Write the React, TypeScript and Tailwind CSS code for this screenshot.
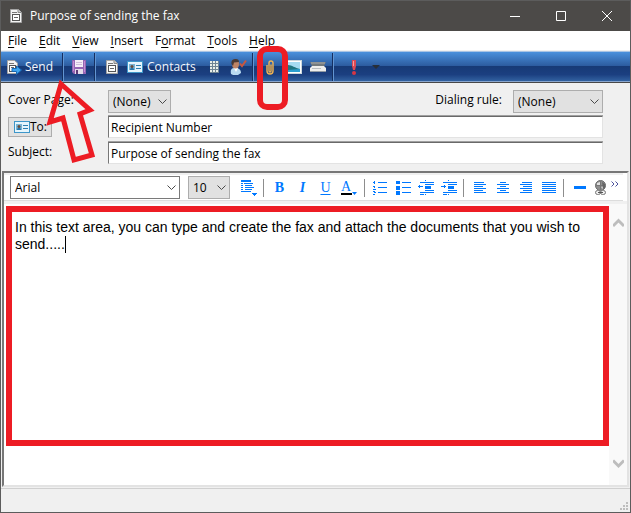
import React from "react";

const BLUE = "#0078ff";

function Lines({ rects, w = 16, h = 16 }: { rects: number[][]; w?: number; h?: number }) {
  return (
    <svg width={w} height={h} className="shrink-0" shapeRendering="crispEdges" fill={BLUE} aria-hidden="true">
      {rects.map(([x, y, rw, rh], i) => (
        <rect key={i} x={x} y={y} width={rw} height={rh} />
      ))}
    </svg>
  );
}

function FaxIcon() {
  return (
    <svg width="14" height="16" viewBox="0 0 14 16" aria-hidden="true">
      <path d="M1.500 1.500h8L12.500 4.500v10h-11z" fill="#f4f4f4" stroke="#a5a5a5" />
      <path d="M9 1.500v3h3.500" fill="#ccc" stroke="#888" />
      <path d="M3 4.500h5" stroke="#777" />
      <rect x="3.500" y="6.500" width="7" height="6" fill="#fff" stroke="#555" />
      <path d="M5 9.500h4" stroke="#666" />
    </svg>
  );
}

function SendIcon() {
  return (
    <svg width="15" height="16" viewBox="0 0 15 16" aria-hidden="true">
      <path d="M.5 1.500h7L10.500 4v10.500H.5z" fill="#f4f4f4" stroke="#a5a5a5" />
      <path d="M2 4.500h5" stroke="#777" />
      <rect x="2.500" y="6.500" width="6" height="6" fill="#fff" stroke="#555" />
      <path d="M4 8.500h3" stroke="#666" />
      <path d="M5 9.500h4.500V7L14.500 11l-5 4.500v-3H5z" fill="#3ea4ee" stroke="#1668b4" />
    </svg>
  );
}

function FloppyIcon() {
  return (
    <svg width="14" height="14" viewBox="0 0 14 14" aria-hidden="true">
      <path d="M0 0h14v14H2l-2-2z" fill="#9565b4" />
      <rect x="3" y="0" width="8" height="7" fill="#f6edf8" />
      <path d="M4 2.500h6M4 4.500h6" stroke="#d0bddb" />
      <rect x="3" y="9" width="8" height="5" fill="#e4dcea" />
      <rect x="4" y="10" width="2" height="4" fill="#5c3a78" />
      <path d="M1.500 1v10M12.500 1v11" stroke="#c08ed2" />
    </svg>
  );
}

function CardIcon() {
  return (
    <svg width="16" height="12" viewBox="0 0 16 12" className="shrink-0" aria-hidden="true">
      <rect x=".5" y=".5" width="15" height="11" fill="#e5f5fc" stroke="#3d96c9" />
      <rect x="2" y="3" width="6" height="6" fill="#78b5d5" />
      <circle cx="5" cy="5.500" r="1.500" fill="#684c3c" />
      <path d="M3 9c0-3 4-3 4 0z" fill="#2575ab" />
      <path d="M9 4.500h5M9 7.500h5" stroke="#2d7fb0" />
    </svg>
  );
}

function KeypadIcon() {
  return (
    <svg width="9" height="12" shapeRendering="crispEdges" aria-hidden="true">
      <rect width="9" height="12" fill="#6f8594" />
      {[0, 3, 6, 9].map((y) =>
        [0, 3, 6].map((x) => <rect key={`${x}-${y}`} x={x} y={y} width="2" height="2" fill="#e9efe9" />)
      )}
    </svg>
  );
}

function CheckNameIcon() {
  return (
    <svg width="17" height="16" viewBox="0 0 17 16" aria-hidden="true">
      <path d="M1 15c-1-5 1-6 4-6s6 1 6 5l-3 2H3z" fill="#b8daf1" />
      <path d="M4 9l2 4 2-4z" fill="#fff" />
      <ellipse cx="5.500" cy="5" rx="3.500" ry="4.500" fill="#bd8466" />
      <path d="M1.500 5C1 1 3 0 6 0c2 0 3 1 3 3L4 3.500 3 7z" fill="#493a35" />
      <path d="M10 4.500l2 2.500 4-5.500" fill="none" stroke="#c9573f" strokeWidth="2" />
    </svg>
  );
}

function ClipIcon() {
  return (
    <svg width="9" height="15" viewBox="0 0 9 15" fill="none" stroke="#f2b450" strokeWidth="1.400" aria-hidden="true">
      <path d="M1 5v6a3 3 0 0 0 6 0V3a2 2 0 0 0-4 0v8a1 1 0 0 0 2 0V4.500" />
    </svg>
  );
}

function PictureIcon() {
  return (
    <svg width="16" height="14" viewBox="0 0 16 14" aria-hidden="true">
      <rect x=".5" y=".5" width="15" height="13" fill="#fff" stroke="#ccd8dd" />
      <rect x="2" y="2" width="12" height="10" fill="#a5dcf2" />
      <path d="M2 5c4 0 7 3 12 4v3H2z" fill="#1e7580" />
      <path d="M2 10l12-1v3H2z" fill="#2b9fd0" />
    </svg>
  );
}

function ScannerIcon() {
  return (
    <svg width="16" height="10" viewBox="0 0 16 10" aria-hidden="true">
      <path d="M0 0h16l-2 4H2z" fill="#747a7d" />
      <path d="M1 1h14" stroke="#a7aaab" />
      <path d="M2 4h12l2 2v3H0V6z" fill="#eeeeec" />
      <path d="M0 9.500h16" stroke="#929ba5" />
      <path d="M2 6.500h9" stroke="#b9bdc1" />
    </svg>
  );
}

function ImportantIcon() {
  return (
    <svg width="6" height="15" viewBox="0 0 6 15" aria-hidden="true">
      <path d="M1 0h4v6L4 10H2L1 6z" fill="#dc4955" />
      <path d="M2 1h1v5H2z" fill="#f7a0a0" />
      <circle cx="3" cy="13" r="2" fill="#d63644" />
    </svg>
  );
}

function GlobeLinkIcon() {
  return (
    <svg width="13" height="16" viewBox="0 0 13 16" aria-hidden="true">
      <circle cx="6.500" cy="5.500" r="5" fill="#8f8f8f" stroke="#6a6a6a" />
      <path d="M2 5.500h9M6.500 1v9" stroke="#777" fill="none" />
      <path d="M3 3l3-1v3H3zM7 7l3-1-1 3z" fill="#e0e0e0" />
      <path d="M8 2l3 2v4L9 9z" fill="#666" />
      <rect x="1.500" y="10.500" width="5" height="4" rx="2" fill="#eee" stroke="#777" />
      <rect x="6.500" y="10.500" width="5" height="4" rx="2" fill="#eee" stroke="#777" />
      <path d="M4 12.500h5" stroke="#555" />
    </svg>
  );
}

function Chevron({ className = "" }: { className?: string }) {
  return (
    <svg width="9" height="6" viewBox="0 0 9 6" fill="none" stroke="#4a4a4a" className={className} aria-hidden="true">
      <path d="M.5 .5l4 4 4-4" />
    </svg>
  );
}

function Dropdown({ id, label, options, className, tone }: {
  id: string; label?: string; options: string[]; className: string; tone: string;
}) {
  return (
    <div className={`relative shrink-0 ${className}`}>
      <select id={id} aria-label={label} className={`block h-[23px] w-full appearance-none border pl-1 leading-[20px] outline-none ${tone}`}>
        {options.map((o) => <option key={o}>{o}</option>)}
      </select>
      <Chevron className="pointer-events-none absolute right-1 top-[9px]" />
    </div>
  );
}

function BarSeparator() {
  return <div className="h-7 w-[2px] shrink-0 border-l border-r border-l-[#152f60] border-r-[#6295d2]" />;
}

function EditSeparator() {
  return <div className="h-[18px] w-px shrink-0 bg-[#8d8d8d]" />;
}

const menu: [string, string, string][] = [
  ["", "F", "ile"], ["", "E", "dit"], ["", "V", "iew"], ["", "I", "nsert"],
  ["F", "o", "rmat"], ["", "T", "ools"], ["", "H", "elp"],
];

const bodyText =
  "In this text area, you can type and create the fax and attach the documents that you wish to send.....";

const fieldClass =
  "h-[22px] min-w-0 flex-1 border border-b-[#e3e3e3] border-l-[#777] border-r-[#e3e3e3] border-t-[#696969] bg-white px-[2px] outline-none shadow-[0_-1px_0_#a0a0a0]";

const align: Record<string, number[][]> = {
  left: [[1, 0, 10, 1], [1, 2, 12, 1], [1, 4, 9, 1], [1, 6, 12, 1], [1, 8, 9, 1], [1, 10, 12, 1]],
  center: [[4, 0, 6, 1], [1, 2, 12, 1], [4, 4, 6, 1], [1, 6, 12, 1], [4, 8, 6, 1], [1, 10, 12, 1]],
  right: [[3, 0, 10, 1], [1, 2, 12, 1], [4, 4, 9, 1], [1, 6, 12, 1], [4, 8, 9, 1], [1, 10, 12, 1]],
  full: [[0, 0, 14, 1], [0, 2, 14, 1], [0, 4, 14, 1], [0, 6, 14, 1], [0, 8, 14, 1], [0, 10, 14, 1]],
};

function EditButton({ label, children }: { label: string; children: React.ReactNode }) {
  return (
    <button aria-label={label} className="flex h-[22px] w-[23px] shrink-0 items-center justify-center">
      {children}
    </button>
  );
}

export default function App() {
  return (
    <div className="flex h-screen flex-col overflow-hidden border border-[#5c5c5c] bg-[#f0f0f0] font-['Open_Sans',sans-serif] text-[12px] leading-4 text-black">
      <header className="flex h-[30px] shrink-0 items-center bg-[#4c4a48] pl-2 text-white">
        <FaxIcon />
        <h1 className="ml-[7px] flex-1">Purpose of sending the fax</h1>
        <button aria-label="Minimize" className="flex h-full w-[46px] items-center justify-center">
          <svg width="10" height="10" stroke="#fff"><path d="M0 5.500h10" /></svg>
        </button>
        <button aria-label="Maximize" className="flex h-full w-[46px] items-center justify-center">
          <svg width="10" height="10" stroke="#fff" fill="none"><path d="M.5.5h9v9h-9z" /></svg>
        </button>
        <button aria-label="Close" className="flex h-full w-[46px] items-center justify-center">
          <svg width="10" height="10" stroke="#fff"><path d="M0 0l10 10M10 0L0 10" /></svg>
        </button>
      </header>

      <nav className="flex h-[20px] shrink-0 items-center gap-3 border-b border-[#f0f0f0] bg-white pl-[7px]">
        {menu.map(([a, b, c]) => (
          <button key={a + b + c} className="leading-4">
            {a}<span className="underline underline-offset-2">{b}</span>{c}
          </button>
        ))}
      </nav>

      <div className="flex h-8 shrink-0 items-center border-b border-t border-b-[#484848] border-t-[#a9c4e4] bg-[linear-gradient(#4a90dc_0%,#2c5b9e_47%,#173a76_48%,#1b3f80_75%,#31609f_96%,#89a6ce_97%)] text-[#f3f7fc]">
        <div className="relative flex w-[61px] shrink-0">
          <button className="flex items-center gap-[3px] pl-[6px]"><SendIcon />Send</button>
          <svg className="pointer-events-none absolute left-[43px] top-[17px] z-20" width="56" height="92" viewBox="44 75 56 92" aria-hidden="true">
            <path d="M61 83L90 109L80 113L92 154L74 159L63 117L50 121Z" fill="none" stroke="#ed1c24" strokeWidth="5" />
          </svg>
        </div>
        <BarSeparator />
        <button aria-label="Save" className="flex w-[30px] shrink-0 justify-center"><FloppyIcon /></button>
        <BarSeparator />
        <button aria-label="New fax" className="ml-[9px] shrink-0"><FaxIcon /></button>
        <button className="ml-2 flex shrink-0 items-center gap-1"><CardIcon /><span className="w-[48px] text-left">Contacts</span></button>
        <button aria-label="Dial" className="ml-[15px] shrink-0"><KeypadIcon /></button>
        <button aria-label="Check names" className="ml-[11px] mr-[5px] shrink-0"><CheckNameIcon /></button>
        <BarSeparator />
        <button aria-label="Attach file" className="relative flex w-[32px] shrink-0 justify-center">
          <ClipIcon />
          <span className="pointer-events-none absolute left-[3px] top-[-14px] z-20 h-16 w-[31px] rounded-[10px] border-[6px] border-[#ed1c24]" />
        </button>
        <button aria-label="Insert picture" className="shrink-0"><PictureIcon /></button>
        <button aria-label="Insert from scanner" className="ml-2 mr-[6px] shrink-0"><ScannerIcon /></button>
        <BarSeparator />
        <button aria-label="High importance" className="ml-[17px] shrink-0"><ImportantIcon /></button>
        <button aria-label="More" className="ml-[15px] shrink-0">
          <svg width="8" height="4"><path d="M0 0h8L4 4z" fill="#282f38" /></svg>
        </button>
      </div>

      <section className="flex shrink-0 flex-col pb-[7px] pl-[7px] pr-[27px] pt-[7px]">
        <div className="flex h-[26px]">
          <label htmlFor="cover" className="w-[100px] shrink-0 pt-[2px]">Cover Page:</label>
          <Dropdown id="cover" options={["(None)"]} className="w-[63px]" tone="border-[#adadad] bg-[#e1e1e1]" />
          <label htmlFor="dial" className="ml-auto mr-[11px] pt-[2px]">Dialing rule:</label>
          <Dropdown id="dial" options={["(None)"]} className="w-[90px]" tone="border-[#adadad] bg-[#e1e1e1]" />
        </div>
        <div className="flex h-[26px] items-start">
          <div className="w-[100px] shrink-0">
            <button className="mt-px flex h-5 w-11 items-center border border-[#adadad] bg-[#e1e1e1] pl-[5px]"><CardIcon /><label htmlFor="to">To:</label></button>
          </div>
          <input id="to" className={fieldClass} defaultValue="Recipient Number" />
        </div>
        <div className="flex h-[22px]">
          <label htmlFor="subject" className="w-[100px] shrink-0 pt-[2px]">Subject:</label>
          <input id="subject" className={fieldClass} defaultValue="Purpose of sending the fax" />
        </div>
      </section>

      <main className="mx-px flex min-h-0 flex-1 flex-col border-2 border-b-[#e3e3e3] border-l-[#777] border-r-[#e3e3e3] border-t-[#777] bg-white">
        <div className="mr-1 flex h-[28px] shrink-0 items-center border-b border-t-2 border-b-[#dcdcdc] border-t-[#f0f0f0] pl-[6px]">
          <Dropdown id="font" label="Font" options={["Arial"]} className="w-[170px]" tone="border-[#7a7a7a] bg-white" />
          <Dropdown id="size" label="Font size" options={["10"]} className="ml-2 w-[42px]" tone="border-[#adadad] bg-[#e1e1e1]" />
          <button aria-label="Paragraph style" className="ml-[10px] mr-[6px] shrink-0">
            <Lines w={17} h={17} rects={[[1, 1, 10, 2], [4, 4, 9, 1], [5, 6, 7, 1], [5, 8, 9, 1], [5, 10, 7, 1], [1, 12, 10, 1], [1, 4, 2, 1], [1, 6, 2, 1], [1, 8, 2, 1], [1, 10, 2, 1], [12, 14, 5, 1], [13, 15, 3, 1], [14, 16, 1, 1]]} />
          </button>
          <EditSeparator />
          <div className="ml-1 flex font-['Liberation_Serif',serif] text-[14px] text-[#0078ff]">
            <EditButton label="Bold"><b>B</b></EditButton>
            <EditButton label="Italic"><i className="font-bold">I</i></EditButton>
            <EditButton label="Underline"><u className="underline-offset-2">U</u></EditButton>
            <EditButton label="Font color">
              <span className="w-[11px] border-b-2 border-black leading-[13px]">A</span>
              <svg width="5" height="3" className="mt-3"><path d="M0 0h5L2.500 3z" fill={BLUE} /></svg>
            </EditButton>
          </div>
          <div className="ml-1 flex"><EditSeparator /></div>
          <div className="ml-1 flex">
            <EditButton label="Numbered list">
              <Lines w={15} h={14} rects={[[1, 0, 1, 3], [0, 1, 1, 1], [0, 5, 2, 1], [1, 6, 1, 1], [0, 8, 3, 1], [0, 10, 2, 1], [1, 11, 2, 1], [0, 13, 2, 1], [5, 1, 9, 1], [5, 6, 9, 1], [5, 11, 9, 1]]} />
            </EditButton>
            <EditButton label="Bulleted list">
              <Lines w={15} h={14} rects={[[0, 0, 4, 3], [0, 5, 4, 4], [0, 10, 4, 4], [6, 1, 9, 1], [6, 6, 9, 1], [6, 11, 9, 1]]} />
            </EditButton>
            <EditButton label="Decrease indent">
              <Lines w={17} rects={[[2, 2, 14, 1], [7, 4, 9, 1], [7, 6, 6, 3], [7, 10, 9, 1], [2, 12, 14, 1], [7, 0, 1, 1], [7, 14, 1, 1], [0, 6, 5, 1], [1, 5, 1, 3], [2, 14, 4, 1]]} />
            </EditButton>
            <EditButton label="Increase indent">
              <Lines w={17} rects={[[2, 2, 14, 1], [7, 4, 9, 1], [7, 6, 6, 3], [7, 10, 9, 1], [2, 12, 14, 1], [7, 0, 1, 1], [7, 14, 1, 1], [0, 6, 5, 1], [3, 5, 1, 3], [2, 14, 4, 1]]} />
            </EditButton>
          </div>
          <div className="ml-[2px] flex"><EditSeparator /></div>
          <div className="ml-[5px] flex">
            <EditButton label="Align left"><Lines w={15} h={12} rects={align.left} /></EditButton>
            <EditButton label="Center"><Lines w={15} h={12} rects={align.center} /></EditButton>
            <EditButton label="Align right"><Lines w={15} h={12} rects={align.right} /></EditButton>
            <EditButton label="Justify"><Lines w={15} h={12} rects={align.full} /></EditButton>
          </div>
          <div className="ml-[2px] flex"><EditSeparator /></div>
          <button aria-label="Horizontal line" className="ml-[10px] shrink-0"><Lines w={12} h={3} rects={[[0, 0, 12, 3]]} /></button>
          <button aria-label="Insert link" className="ml-2 shrink-0"><GlobeLinkIcon /></button>
          <button aria-label="More tools" className="mb-2 ml-1 shrink-0">
            <svg width="8" height="6" fill="none" stroke="#4b519c"><path d="M.5 .5L3 3 .5 5.500M4.500 .5L7 3 4.500 5.500" /></svg>
          </button>
        </div>

        <div className="flex min-h-0 flex-1 border-t-[3px] border-[#f0f0f0]">
          <div className="flex min-w-0 flex-1 flex-col pb-[39px] pl-[2px] pt-px">
            <div className="relative mt-px flex min-h-0 flex-1 border-[6px] border-[#ed1c24]">
              <textarea
                aria-label="Message"
                className="block w-full resize-none overflow-hidden px-[3px] pt-[7px] font-['Liberation_Sans',Arial,sans-serif] text-[14px] leading-[17px] outline-none"
                defaultValue={bodyText}
              />
              <span className="pointer-events-none absolute left-[53px] top-[24px] h-[17px] w-px bg-black" />
            </div>
          </div>
          <div className="flex w-[18px] shrink-0 flex-col items-center justify-between bg-[#f9f9f9] pb-[16px] pt-[14px]">
            <button aria-label="Scroll up">
              <svg width="11" height="10" fill="none" stroke="#bdbdbd" strokeWidth="3"><path d="M0 8l5.500-5.500L11 8" /></svg>
            </button>
            <button aria-label="Scroll down">
              <svg width="11" height="10" fill="none" stroke="#bdbdbd" strokeWidth="3"><path d="M0 1.500L5.500 7 11 1.500" /></svg>
            </button>
          </div>
        </div>
      </main>

      <footer className="mt-px flex h-[24px] shrink-0 items-end justify-end border-t border-[#d0d0d0] pb-[2px] pr-[2px]">
        <svg width="8" height="8" shapeRendering="crispEdges" fill="#bdbdbd" aria-hidden="true">
          <path d="M6 0h2v2H6zM3 3h2v2H3zM6 3h2v2H6zM0 6h2v2H0zM3 6h2v2H3zM6 6h2v2H6z" />
        </svg>
      </footer>
    </div>
  );
}
